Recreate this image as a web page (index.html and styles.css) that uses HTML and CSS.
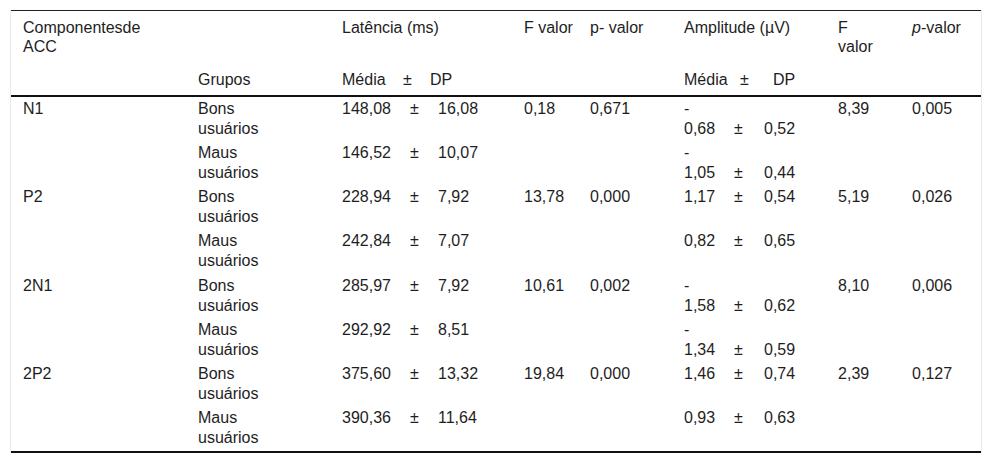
FILE: index.html
```html
<!DOCTYPE html>
<html lang="pt">
<head>
<meta charset="utf-8">
<title>Componentes ACC</title>
<link rel="stylesheet" href="styles.css">
</head>
<body>
<div class="wrap">
<table class="data">
<colgroup>
<col class="c1"><col class="c2"><col class="c3"><col class="c4"><col class="c5"><col class="c6">
<col class="c7"><col class="c8"><col class="c9"><col class="c10"><col class="c11"><col class="c12">
</colgroup>
<thead>
<tr class="h1">
<th class="comp">Componentesde ACC</th>
<th></th>
<th colspan="3">Latência (ms)</th>
<th>F valor</th>
<th>p- valor</th>
<th colspan="3">Amplitude (µV)</th>
<th class="fv2">F valor</th>
<th><i>p</i>-valor</th>
</tr>
<tr class="h2">
<th></th>
<th>Grupos</th>
<th>Média</th>
<th class="hpm1">±</th>
<th class="hdp1">DP</th>
<th></th>
<th></th>
<th>Média</th>
<th class="hpm2">±</th>
<th class="hdp2">DP</th>
<th></th>
<th></th>
</tr>
</thead>
<tbody>
<tr>
<td>N1</td><td class="grp">Bons usuários</td>
<td>148,08</td><td class="pm1">±</td><td>16,08</td><td>0,18</td><td>0,671</td>
<td><span class="sign">-</span>0,68</td><td class="low pm2">±</td><td class="low">0,52</td>
<td>8,39</td><td>0,005</td>
</tr>
<tr>
<td></td><td class="grp">Maus usuários</td>
<td>146,52</td><td class="pm1">±</td><td>10,07</td><td></td><td></td>
<td><span class="sign">-</span>1,05</td><td class="low pm2">±</td><td class="low">0,44</td>
<td></td><td></td>
</tr>
<tr>
<td>P2</td><td class="grp">Bons usuários</td>
<td>228,94</td><td class="pm1">±</td><td>7,92</td><td>13,78</td><td>0,000</td>
<td>1,17</td><td class="pm2">±</td><td>0,54</td>
<td>5,19</td><td>0,026</td>
</tr>
<tr>
<td></td><td class="grp">Maus usuários</td>
<td>242,84</td><td class="pm1">±</td><td>7,07</td><td></td><td></td>
<td>0,82</td><td class="pm2">±</td><td>0,65</td>
<td></td><td></td>
</tr>
<tr>
<td>2N1</td><td class="grp">Bons usuários</td>
<td>285,97</td><td class="pm1">±</td><td>7,92</td><td>10,61</td><td>0,002</td>
<td><span class="sign">-</span>1,58</td><td class="low pm2">±</td><td class="low">0,62</td>
<td>8,10</td><td>0,006</td>
</tr>
<tr>
<td></td><td class="grp">Maus usuários</td>
<td>292,92</td><td class="pm1">±</td><td>8,51</td><td></td><td></td>
<td><span class="sign">-</span>1,34</td><td class="low pm2">±</td><td class="low">0,59</td>
<td></td><td></td>
</tr>
<tr>
<td>2P2</td><td class="grp">Bons usuários</td>
<td>375,60</td><td class="pm1">±</td><td>13,32</td><td>19,84</td><td>0,000</td>
<td>1,46</td><td class="pm2">±</td><td>0,74</td>
<td>2,39</td><td>0,127</td>
</tr>
<tr>
<td></td><td class="grp">Maus usuários</td>
<td>390,36</td><td class="pm1">±</td><td>11,64</td><td></td><td></td>
<td>0,93</td><td class="pm2">±</td><td>0,63</td>
<td></td><td></td>
</tr>
</tbody>
</table>
</div>
</body>
</html>
```

FILE: styles.css
```css
html, body {
  margin: 0;
  padding: 0;
  background: #fff;
}
body {
  font-family: "Liberation Sans", Arial, sans-serif;
  font-size: 16px;
  color: #1e1e1e;
}
.wrap {
  margin: 10px 10px 0 10px;
  width: 972px;
  border-left: 1px solid #e8e8e8;
  border-right: 1px solid #e8e8e8;
  box-sizing: border-box;
}
.data {
  width: 970px;
  table-layout: fixed;
  border-collapse: collapse;
  border-top: 1px solid #222;
  border-bottom: 2px solid #111;
}
.c1 { width: 175px; }
.c2 { width: 144px; }
.c3 { width: 70px; }
.c4 { width: 26px; }
.c5 { width: 86px; }
.c6 { width: 66px; }
.c7 { width: 94px; }
.c8 { width: 52px; }
.c9 { width: 28px; }
.c10 { width: 74px; }
.c11 { width: 74px; }
.c12 { width: 81px; }

th {
  font-weight: normal;
  text-align: left;
  vertical-align: top;
  padding: 8px 4px 6px 12px;
  line-height: 18.5px;
}
.h2 th {
  padding-top: 9px;
  padding-bottom: 5px;
  border-bottom: 2px solid #111;
}
th.comp { padding-right: 40px; }
th.fv2 { padding-right: 24px; }
th.hpm1 { padding-left: 3px; }
th.hdp1 { padding-left: 4px; }
th.hpm2 { padding-left: 16px; }
th.hdp2 { padding-left: 21px; }

td {
  vertical-align: top;
  padding: 2px 0 2.25px 12px;
  line-height: 20px;
  white-space: nowrap;
}
td.grp {
  white-space: normal;
  padding-right: 50px;
}
td.pm1 { padding-left: 10px; }
td.pm2 { padding-left: 10px; }
td.low { vertical-align: bottom; }
.sign { display: block; }
```
